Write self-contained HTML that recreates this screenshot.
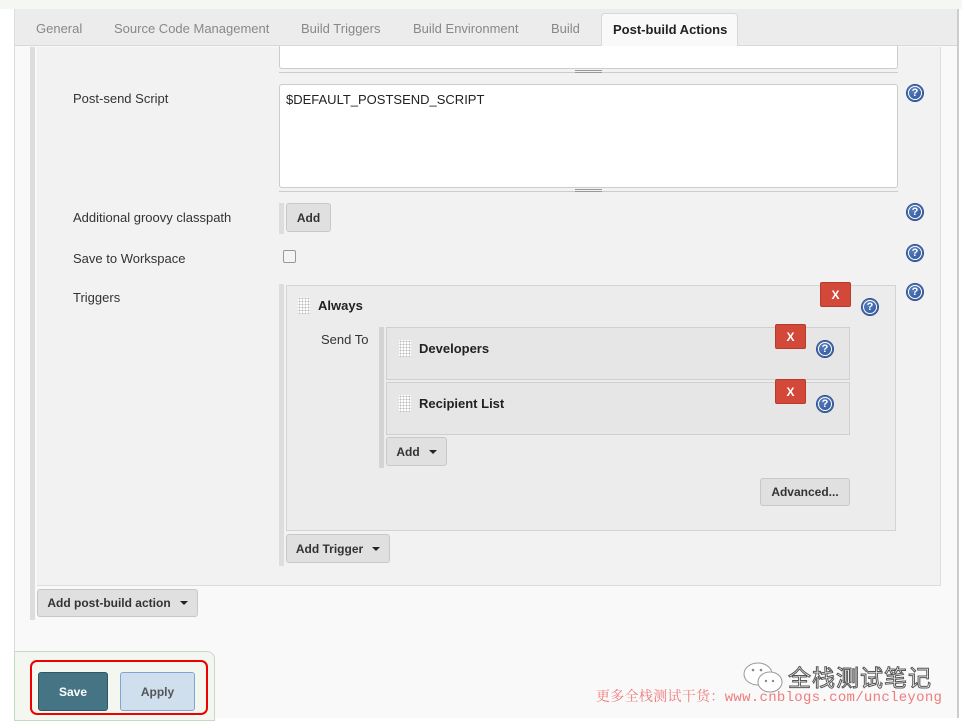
<!DOCTYPE html>
<html><head><meta charset="utf-8"><style>
*{box-sizing:border-box;margin:0;padding:0}
body{width:962px;height:718px;overflow:hidden;background:#fff;font-family:"Liberation Sans",Arial,sans-serif;font-size:13px;color:#333;position:relative}
.a{position:absolute}
.tab{position:absolute;top:21px;color:#888;font-size:13px}
.btn{position:absolute;background:#e0e0e0;border:1px solid #c8c8c8;border-radius:3px;font-weight:bold;font-size:12px;color:#333;display:flex;align-items:center;justify-content:center}
.car{display:inline-block;width:0;height:0;border-left:4px solid transparent;border-right:4px solid transparent;border-top:4px solid #222;margin-left:9px}
.x{position:absolute;width:31px;height:25px;background:#d24939;border:1px solid #b83a2c;border-radius:2px;color:#fff;font-weight:bold;font-size:12px;display:flex;align-items:center;justify-content:center}
.h{position:absolute;width:16px;height:16px;border-radius:50%;background:radial-gradient(circle at 40% 35%,#5a7fc0,#1f4a8f);box-shadow:0 0 0 1px #2c4f8c;display:flex;align-items:center;justify-content:center;color:#fff;font-weight:bold;font-size:11px}
.h::before{content:"";position:absolute;inset:1px;border:1px solid #fff;border-radius:50%}
.grip{position:absolute;width:12px;height:17px;background-image:radial-gradient(#bbb 0.8px,transparent 1px);background-size:3px 3px;background-color:#fff}
.lbl{position:absolute;color:#333;font-size:13px}
</style></head><body>
<div class="a" style="left:0;top:0;width:962px;height:9px;background:#f5f7f2"></div>
<div class="a" style="left:14px;top:9px;width:945px;height:709px;background:#f9f9f9;border-left:1px solid #ddd;border-right:2px solid #ccc"></div>
<div class="a" style="left:15px;top:9px;width:942px;height:37px;background:#ececec;border-bottom:1px solid #d8d8d8"></div>
<span class="tab" style="left:36px">General</span>
<span class="tab" style="left:114px">Source Code Management</span>
<span class="tab" style="left:301px">Build Triggers</span>
<span class="tab" style="left:413px">Build Environment</span>
<span class="tab" style="left:551px">Build</span>
<div class="a" style="left:601px;top:13px;width:137px;height:34px;background:#f9f9f9;border:1px solid #d8d8d8;border-bottom:none;border-radius:4px 4px 0 0;font-weight:bold;color:#222;padding:8px 0 0 11px">Post-build Actions</div>
<div class="a" style="left:30px;top:47px;width:5px;height:573px;background:#ddd"></div>
<div class="a" style="left:37px;top:47px;width:904px;height:539px;background:#f2f2f2;border-right:1px solid #ddd;border-bottom:1px solid #ddd"></div>
<div class="a" style="left:279px;top:46px;width:619px;height:23px;background:#fff;border:1px solid #ccc;border-top:none;border-radius:0 0 3px 3px"></div>
<div class="a" style="left:279px;top:69px;width:619px;height:4px;border-bottom:1px solid #ccc"></div>
<div class="a" style="left:575px;top:70px;width:27px;height:3px;border-top:1px solid #999;border-bottom:1px solid #999"></div>
<span class="lbl" style="left:73px;top:91px">Post-send Script</span>
<div class="a" style="left:279px;top:84px;width:619px;height:104px;background:#fff;border:1px solid #ccc;border-radius:3px;padding:7px 6px;color:#222">$DEFAULT_POSTSEND_SCRIPT</div>
<div class="a" style="left:279px;top:188px;width:619px;height:4px;border-bottom:1px solid #ccc"></div>
<div class="a" style="left:575px;top:189px;width:27px;height:3px;border-top:1px solid #999;border-bottom:1px solid #999"></div>
<div class="h" style="left:907px;top:85px">?</div>
<span class="lbl" style="left:73px;top:210px">Additional groovy classpath</span>
<div class="a" style="left:279px;top:203px;width:5px;height:31px;background:#ddd"></div>
<div class="btn" style="left:286px;top:203px;width:45px;height:29px">Add</div>
<div class="h" style="left:907px;top:204px">?</div>
<span class="lbl" style="left:73px;top:251px">Save to Workspace</span>
<div class="a" style="left:283px;top:250px;width:13px;height:13px;border:1px solid #999;border-radius:2px;background:#f4f4f4"></div>
<div class="h" style="left:907px;top:245px">?</div>
<span class="lbl" style="left:73px;top:290px">Triggers</span>
<div class="h" style="left:907px;top:284px">?</div>
<div class="a" style="left:279px;top:284px;width:5px;height:282px;background:#ddd"></div>
<div class="a" style="left:286px;top:285px;width:610px;height:246px;background:#ececec;border:1px solid #d4d4d4"></div>
<div class="grip" style="left:298px;top:297px"></div>
<span class="a" style="left:318px;top:298px;font-weight:bold;color:#222">Always</span>
<div class="x" style="left:820px;top:282px">X</div>
<div class="h" style="left:862px;top:299px">?</div>
<span class="lbl" style="left:321px;top:332px">Send To</span>
<div class="a" style="left:379px;top:327px;width:5px;height:141px;background:#d4d4d4"></div>
<div class="a" style="left:386px;top:327px;width:464px;height:53px;background:#e6e6e6;border:1px solid #d0d0d0"></div>
<div class="grip" style="left:399px;top:340px"></div>
<span class="a" style="left:419px;top:341px;font-weight:bold;color:#222">Developers</span>
<div class="x" style="left:775px;top:324px">X</div>
<div class="h" style="left:817px;top:341px">?</div>
<div class="a" style="left:386px;top:382px;width:464px;height:53px;background:#e6e6e6;border:1px solid #d0d0d0"></div>
<div class="grip" style="left:399px;top:395px"></div>
<span class="a" style="left:419px;top:396px;font-weight:bold;color:#222">Recipient List</span>
<div class="x" style="left:775px;top:379px">X</div>
<div class="h" style="left:817px;top:396px">?</div>
<div class="btn" style="left:386px;top:437px;width:61px;height:29px">Add<span class="car"></span></div>
<div class="btn" style="left:760px;top:478px;width:90px;height:28px">Advanced...</div>
<div class="btn" style="left:286px;top:534px;width:104px;height:29px">Add Trigger<span class="car"></span></div>
<div class="btn" style="left:37px;top:589px;width:161px;height:28px">Add post-build action<span class="car"></span></div>
<div class="a" style="left:14px;top:651px;width:201px;height:70px;background:#f4f7f0;border:1px solid #c5d9c5;border-radius:0 8px 0 0"></div>
<div class="a" style="left:30px;top:660px;width:178px;height:55px;border:2px solid #e00;border-radius:7px"></div>
<div class="a" style="left:38px;top:672px;width:70px;height:39px;background:#457584;border:1px solid #2f5866;border-radius:3px;color:#fff;font-weight:bold;font-size:12px;display:flex;align-items:center;justify-content:center">Save</div>
<div class="a" style="left:120px;top:672px;width:75px;height:39px;background:#cfdfee;border:1px solid #7fa6d0;border-radius:3px;color:#555;font-weight:bold;font-size:12px;display:flex;align-items:center;justify-content:center">Apply</div>
<svg class="a" style="left:742px;top:660px" width="44" height="36" viewBox="0 0 44 36"><ellipse cx="16" cy="14" rx="14" ry="11" fill="#fff" stroke="#999"/><ellipse cx="28" cy="22" rx="12" ry="10" fill="#fff" stroke="#999"/><circle cx="11" cy="10" r="1.3" fill="#888"/><circle cx="19" cy="10" r="1.3" fill="#888"/><circle cx="24" cy="21" r="1.2" fill="#888"/><circle cx="31" cy="21" r="1.2" fill="#888"/></svg>
<span class="a" style="left:788px;top:659px;font-family:'Liberation Sans','Noto Sans CJK SC',sans-serif;font-size:23px;color:#fff;-webkit-text-stroke:1px #555;letter-spacing:1px">全栈测试笔记</span>
<span class="a" style="left:596px;top:686px;font-family:'Liberation Mono','Noto Serif CJK SC',monospace;font-size:14px;color:#f07c7c;white-space:nowrap;letter-spacing:0.3px">更多全栈测试干货：www.cnblogs.com/uncleyong</span>
</body></html>
